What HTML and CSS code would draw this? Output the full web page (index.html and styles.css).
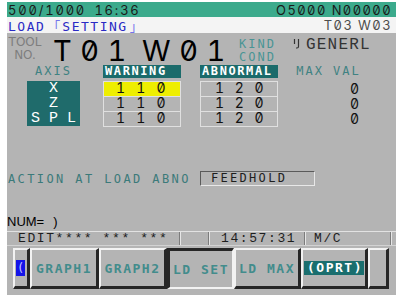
FILE: index.html
```html
<!DOCTYPE html>
<html lang="en">
<head>
  <meta charset="UTF-8">
  <meta name="viewport" content="width=device-width, initial-scale=1.0">
  <title>Load setting</title>
  <link rel="stylesheet" href="styles.css">
</head>
<body>

  <div class="screen">
    <div class="top-bar">
      <span class="top-left">500/1000 16:36</span>
      <span>O5000 N00000</span>
    </div>
    <div class="title-bar">
      <span class="title">LOAD<span class="bracket">「</span>SETTING<span class="bracket">」</span></span>
      <span class="tool-sel">T03 W03</span>
    </div>

    <div class="main">
      <div class="tool-row">
        <div class="tool-label">TOOL<br>NO.</div>
        <div class="tool-no">T01 W01</div>
        <div class="kind">KIND<br>COND</div>
        <div class="kind-val">
          <svg class="kind-icon" width="8" height="11" viewBox="0 0 8 11">
            <path d="M1.5 1 V6 M5.5 1 V8.5 Q5.5 10 4 10 H3" fill="none" stroke="#333" stroke-width="1.2"/>
          </svg>
          GENERL
        </div>
      </div>

      <div class="load-table">
        <div class="col col-axis">
          <div class="head">AXIS</div>
          <div class="axis-block">
            <div>X</div>
            <div>Z</div>
            <div>S P L</div>
          </div>
        </div>
        <div class="col col-warn">
          <div class="head head-box">WARNING</div>
          <div class="cells">
            <div class="cell cell-active">110</div>
            <div class="cell">110</div>
            <div class="cell">110</div>
          </div>
        </div>
        <div class="col col-abn">
          <div class="head head-box">ABNORMAL</div>
          <div class="cells">
            <div class="cell">120</div>
            <div class="cell">120</div>
            <div class="cell">120</div>
          </div>
        </div>
        <div class="col col-max">
          <div class="head">MAX VAL</div>
          <div class="max-cell">0</div>
          <div class="max-cell">0</div>
          <div class="max-cell">0</div>
        </div>
      </div>

      <div class="action">
        <div class="action-label">ACTION AT LOAD ABNO</div>
        <div class="action-box">FEEDHOLD</div>
      </div>

      <div class="num">NUM=<span class="num-close">)</span></div>

      <div class="status">
        <div class="status-cell status-mode">EDIT**** *** ***</div>
        <div class="status-cell status-gap"></div>
        <div class="status-cell status-time">14:57:31</div>
        <div class="status-cell status-mc">M/C</div>
      </div>

      <div class="softkeys">
        <div class="key key-small"><span class="key-prev">(</span></div>
        <div class="key">GRAPH1</div>
        <div class="key">GRAPH2</div>
        <div class="key key-pressed">LD SET</div>
        <div class="key">LD MAX</div>
        <div class="key"><span class="key-oprt">(OPRT)</span></div>
        <div class="key key-end"></div>
      </div>
    </div>
  </div>

</body>
</html>
```

FILE: styles.css
```css
body {
  margin: 0;
  background-color: #fff;
}
.screen {
  margin: 2px 0 0 7px;
  width: 389px;
  font-family: "DejaVu Sans Mono", monospace;
}
.top-bar {
  height: 15px;
  background-color: #3caa8c;
  display: flex;
  justify-content: space-between;
  align-items: center;
  padding: 0 4px 0 1px;
  font-family: Inter, sans-serif;
  font-feature-settings: "zero" 1, "tnum" 1;
  font-size: 13px;
  letter-spacing: 1.4px;
  color: #1a1a1a;
}
.top-left {
  letter-spacing: 1.8px;
  word-spacing: 3px;
}
.title-bar {
  height: 16px;
  background-color: #f4f4f4;
  display: flex;
  justify-content: space-between;
  align-items: center;
  padding: 0 4px 0 1px;
  font-size: 13px;
  letter-spacing: 1.5px;
}
.title {
  color: #2a2ac4;
}
.bracket {
  color: #7474ec;
  margin: 0 2px;
  font-family: "Noto Sans CJK JP", monospace;
  letter-spacing: 0;
}
.tool-sel {
  color: #4d4d4d;
  font-family: Inter, sans-serif;
  font-feature-settings: "zero" 1, "tnum" 1;
  letter-spacing: 1.4px;
}
.main {
  height: 262px;
  width: 396px;
  background-color: #b4b4b4;
  display: flex;
  flex-direction: column;
}

/* tool row */
.tool-row {
  height: 31px;
  display: flex;
  align-items: flex-start;
}
.tool-label {
  width: 36px;
  padding-top: 3px;
  text-align: center;
  font-family: "DejaVu Sans", sans-serif;
  font-size: 12px;
  line-height: 13px;
  color: #7e7e7e;
}
.tool-no {
  width: 186px;
  margin: 5px 0 0 10px;
  font-family: Inter, sans-serif;
  font-feature-settings: "zero" 1, "tnum" 1;
  font-size: 29px;
  line-height: 26px;
  letter-spacing: 8.5px;
  word-spacing: -9px;
  color: #000;
}
.kind {
  width: 54px;
  padding-top: 5px;
  font-size: 12px;
  line-height: 13px;
  letter-spacing: 2px;
  color: #4a9494;
}
.kind-val {
  display: flex;
  align-items: flex-start;
  padding-top: 4px;
  font-family: "Liberation Mono", monospace;
  font-size: 16px;
  line-height: 16px;
  letter-spacing: 1.2px;
  color: #333;
}
.kind-icon {
  margin: 1px 5px 0 0;
}

/* table */
.load-table {
  display: flex;
  margin-top: 1px;
  padding-left: 20px;
}
.col {
  display: flex;
  flex-direction: column;
}
.col-axis {
  width: 53px;
}
.col-warn {
  width: 78px;
  margin-left: 23px;
}
.col-abn {
  width: 78px;
  margin-left: 19px;
}
.col-max {
  width: 65px;
  margin-left: 18px;
}
.head {
  height: 13px;
  line-height: 13px;
  margin-bottom: 3px;
  font-size: 12px;
  letter-spacing: 2px;
  text-align: center;
  color: #3f8282;
}
.head-box {
  background-color: #1b6b6b;
  color: #fff;
  font-weight: bold;
  letter-spacing: 1.6px;
  text-align: left;
  padding-left: 2px;
}
.axis-block {
  background-color: #1f6b6b;
  color: #fff;
  font-family: "Liberation Mono", monospace;
  font-size: 15px;
  line-height: 15px;
  text-align: center;
}
.cells {
  border-top: 1px solid #e0e0e0;
}
.cell {
  height: 15px;
  box-sizing: border-box;
  border: 1px solid #e0e0e0;
  border-top: none;
  font-family: Inter, sans-serif;
  font-feature-settings: "zero" 1, "tnum" 1;
  font-size: 14px;
  line-height: 12px;
  letter-spacing: 11.2px;
  color: #111;
}
.col-warn .cell {
  padding-left: 12px;
}
.col-abn .cell {
  padding-left: 14px;
  letter-spacing: 10.7px;
}
.cell-active {
  background-color: #eeee00;
}
.max-cell {
  height: 15px;
  font-family: Inter, sans-serif;
  font-feature-settings: "zero" 1, "tnum" 1;
  font-size: 14px;
  line-height: 15px;
  text-align: right;
  padding-right: 2px;
  color: #111;
}

/* action */
.action {
  display: flex;
  align-items: center;
  height: 15px;
  margin-top: 44px;
}
.action-label {
  width: 192px;
  padding-left: 1px;
  font-size: 12px;
  letter-spacing: 2.4px;
  color: #3b7a7a;
}
.action-box {
  width: 115px;
  height: 15px;
  box-sizing: border-box;
  border-top: 1px solid #5a5a5a;
  border-left: 1px solid #5a5a5a;
  border-bottom: 1px solid #e8e8e8;
  border-right: 1px solid #e8e8e8;
  padding-left: 10px;
  font-size: 12px;
  line-height: 13px;
  letter-spacing: 2.3px;
  color: #1e1e1e;
}

/* num + status */
.num {
  height: 13px;
  margin-top: 29px;
  font-family: "Liberation Sans", Arial, sans-serif;
  font-size: 13px;
  line-height: 13px;
  color: #000;
}
.num-close {
  margin-left: 9px;
}
.status {
  display: flex;
  height: 15px;
  box-sizing: border-box;
  margin-top: 3px;
  border-top: 1px solid #e2e2e2;
  border-bottom: 1px solid #d2d2d2;
  font-family: "Liberation Mono", monospace;
  font-size: 13px;
  line-height: 13px;
  letter-spacing: 1.6px;
  color: #1e1e1e;
}
.status-cell {
  box-sizing: border-box;
  border-right: 1px solid #7c7c7c;
  box-shadow: 1px 0 0 #e6e6e6;
}
.status-mode {
  width: 173px;
  padding-left: 11px;
}
.status-gap {
  width: 29px;
}
.status-time {
  width: 96px;
  padding-left: 12px;
}
.status-mc {
  width: 86px;
  padding-left: 9px;
}

/* soft keys */
.softkeys {
  display: flex;
  height: 41px;
  margin-top: 2px;
  padding-left: 6px;
}
.key {
  width: 67px;
  box-sizing: border-box;
  display: flex;
  align-items: center;
  justify-content: center;
  border-top: 2px solid #f2f2f2;
  border-left: 2px solid #f2f2f2;
  border-right: 3px solid #262626;
  border-bottom: 3px solid #262626;
  font-size: 13px;
  font-weight: bold;
  letter-spacing: 1.5px;
  color: #428c8c;
}
.key:nth-child(2) {
  width: 69px;
}
.key:nth-child(3) {
  width: 68px;
}
.key-pressed {
  border-top: 3px solid #262626;
  border-left: 3px solid #262626;
  border-right: 2px solid #f2f2f2;
  border-bottom: 2px solid #f2f2f2;
}
.key-small {
  width: 17px;
  justify-content: flex-start;
  padding-left: 1px;
}
.key-prev {
  width: 9px;
  height: 16px;
  background-color: #1414e8;
  color: #c8c8ff;
  font-weight: normal;
  font-size: 12px;
  line-height: 16px;
  letter-spacing: 0;
  text-align: center;
}
.key-oprt {
  background-color: #1a6e6e;
  color: #fff;
  line-height: 14px;
  padding: 0 1px 0 3px;
}
.key-end {
  width: 21px;
}
```
